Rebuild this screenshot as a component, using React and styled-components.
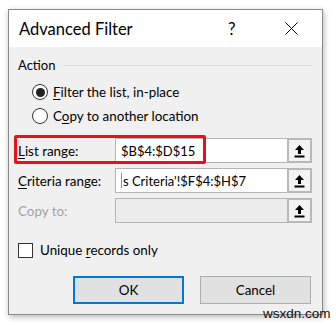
import React from 'react'
import styled, { createGlobalStyle } from 'styled-components'

const Global = createGlobalStyle`
  body {
    margin: 0;
    background: #ffffff;
    font-family: Lato, Roboto, sans-serif;
    color: #000;
  }
`

const Page = styled.div`
  position: relative;
  width: 336px;
  height: 325px;
  padding: 9px 0 0 8px;
  box-sizing: border-box;
`

const Dialog = styled.div`
  width: 315px;
  height: 306px;
  box-sizing: border-box;
  border: 1px solid #8a8a8a;
  background: #f0f0f0;
  box-shadow: 1px 2px 6px rgba(0, 0, 0, 0.28);
  display: flex;
  flex-direction: column;
`

const TitleBar = styled.div`
  height: 37px;
  background: #fff;
  display: flex;
  align-items: center;
  padding-left: 10px;
  font-size: 16.5px;
`

const Title = styled.div`
  flex: 1;
`

const Help = styled.div`
  width: 12px;
  font-size: 17px;
  margin-right: 45px;
`

const Close = styled.svg`
  margin-right: 24px;
`

const Body = styled.div`
  flex: 1;
  padding: 8px 10px 0 9px;
  font-size: 13.4px;
  display: flex;
  flex-direction: column;
  white-space: nowrap;
`

const GroupHead = styled.div`
  display: flex;
  align-items: center;
  height: 20px;
  gap: 8px;
  font-size: 13px;
  &::after {
    content: '';
    flex: 1;
    height: 1px;
    background: #dcdcdc;
  }
`

const Option = styled.label`
  display: flex;
  align-items: center;
  height: 24px;
  padding-left: 14px;
  gap: 5px;
`

const RadioDot = styled.span`
  width: 14px;
  height: 14px;
  border: 1px solid #333;
  border-radius: 50%;
  background: #fff;
  display: flex;
  align-items: center;
  justify-content: center;
  &::after {
    content: '';
    width: 9px;
    height: 9px;
    border-radius: 50%;
    background: ${p => (p.$on ? '#222' : 'transparent')};
  }
`

const U = styled.span`
  text-decoration: underline;
  text-underline-offset: 2px;
`

const Rows = styled.div`
  display: flex;
  flex-direction: column;
  gap: 5px;
  margin-top: 10px;
`

const Row = styled.div`
  position: relative;
  display: flex;
  align-items: center;
  height: 25px;
`

const Label = styled.div`
  width: 97px;
  color: ${p => (p.$disabled ? '#a2a2a2' : '#000')};
`

const Field = styled.div`
  width: 172px;
  height: 25px;
  box-sizing: border-box;
  border: 1px solid #b5b5b5;
  border-right: none;
  background: ${p => (p.$disabled ? '#ececec' : '#fff')};
  display: flex;
  align-items: center;
  padding-left: 5px;
  font-size: 13px;
  overflow: hidden;
`

const Caret = styled.span`
  width: 1px;
  height: 15px;
  background: #7a9ab0;
  margin-right: 1px;
`

const PickButton = styled.div`
  width: 25px;
  height: 25px;
  box-sizing: border-box;
  border: 2px solid #b8b8b8;
  background: #f3f3f3;
  display: flex;
  align-items: center;
  justify-content: center;
`

const Highlight = styled.div`
  position: absolute;
  left: -4px;
  top: -3px;
  width: 192px;
  height: 29px;
  box-sizing: border-box;
  border: 3px solid #e8101a;
  border-radius: 2px;
  pointer-events: none;
`

const Check = styled.label`
  display: flex;
  align-items: center;
  gap: 7px;
  margin-top: 19px;
  height: 16px;
`

const Box = styled.span`
  width: 15px;
  height: 15px;
  box-sizing: border-box;
  border: 1px solid #333;
  background: #fff;
`

const Buttons = styled.div`
  display: flex;
  gap: 16px;
  margin-top: 18px;
  padding-left: 55px;
`

const Button = styled.button`
  width: 111px;
  height: 28px;
  box-sizing: border-box;
  background: #e1e1e1;
  border: ${p => (p.$default ? '2px solid #0078d7' : '1px solid #adadad')};
  font-family: inherit;
  font-size: 13.4px;
  color: #000;
  padding: 0;
`

const Watermark = styled.div`
  position: absolute;
  left: 263px;
  top: 306px;
  font-family: "Liberation Sans", sans-serif;
  font-size: 13.5px;
  color: #111;
`

function UpIcon() {
  return (
    <svg width="11" height="14" viewBox="0 0 11 14">
      <path d="M5.5 1 L10 6 L7 6 L7 10 L4 10 L4 6 L1 6 Z" fill="#000" />
      <rect x="0.5" y="11.5" width="10" height="2" fill="#000" />
    </svg>
  )
}

export default function App() {
  return (
    <Page>
      <Global />
      <Dialog>
        <TitleBar>
          <Title>Advanced Filter</Title>
          <Help>?</Help>
          <Close width="13" height="13" viewBox="0 0 13 13">
            <path d="M0.5 0.5 L12.5 12.5 M12.5 0.5 L0.5 12.5" stroke="#000" strokeWidth="1" fill="none" />
          </Close>
        </TitleBar>
        <Body>
          <GroupHead>Action</GroupHead>
          <Option style={{ marginTop: 5 }}>
            <RadioDot $on />
            <span><U>F</U>ilter the list, in-place</span>
          </Option>
          <Option>
            <RadioDot />
            <span>C<U>o</U>py to another location</span>
          </Option>
          <Rows>
            <Row>
              <Label><U>L</U>ist range:</Label>
              <Field>$B$4:$D$15</Field>
              <PickButton><UpIcon /></PickButton>
              <Highlight />
            </Row>
            <Row>
              <Label><U>C</U>riteria range:</Label>
              <Field><Caret />s Criteria'!$F$4:$H$7</Field>
              <PickButton><UpIcon /></PickButton>
            </Row>
            <Row>
              <Label $disabled>Copy to:</Label>
              <Field $disabled />
              <PickButton><UpIcon /></PickButton>
            </Row>
          </Rows>
          <Check>
            <Box />
            <span>Unique <U>r</U>ecords only</span>
          </Check>
          <Buttons>
            <Button $default>OK</Button>
            <Button>Cancel</Button>
          </Buttons>
        </Body>
      </Dialog>
      <Watermark>wsxdn.com</Watermark>
    </Page>
  )
}
